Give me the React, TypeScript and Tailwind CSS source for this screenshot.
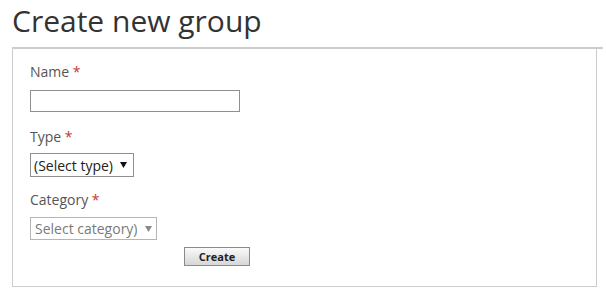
export default function App() {
  return (
    <div className="h-[294px] w-[606px] bg-white font-['Open_Sans',sans-serif]">
      <h1 className="ml-[12px] pt-[3px] text-[30px] leading-[36px] font-normal text-[#333333]">Create new group</h1>
      <div className="mt-[8px] ml-[12px] w-[591px] border-t-2 border-[#cccccc]">
        <div className="w-[585px] border-x border-b border-[#cccccc] pt-[13px] pb-[20px] pl-[17px]">
          <Label text="Name" />
          <input className="mt-[8px] block h-[22px] w-[210px] border border-[#8f8f8f] bg-white outline-none" />

          <div className="mt-[15px]">
            <Label text="Type" />
          </div>
          <div className="mt-[6px] flex h-[24px] w-[104px] items-center border border-[#8f8f8f] pl-[3px] text-[14px] text-[#222222]">
            <span>(Select type)</span>
            <Arrow color="#111111" />
          </div>

          <div className="mt-[13px]">
            <Label text="Category" />
          </div>
          <div className="mt-[7px] flex h-[23px] w-[127px] items-center border border-[#b5b5b5] pl-[4px] text-[14px] text-[#7a7a7a]">
            <span>Select category)</span>
            <Arrow color="#8a8a8a" />
          </div>

          <button className="mt-[7px] ml-[154px] block h-[19px] w-[66px] border border-[#8a8a8a] bg-gradient-to-b from-[#fafafa] to-[#d6d6d6] text-[11px] leading-[16px] font-bold text-[#222222]">
            Create
          </button>
        </div>
      </div>
    </div>
  );
}

function Label({ text }: { text: string }) {
  return (
    <div className="text-[14px] leading-[20px] text-[#555555]">
      {text} <span className="text-[#c0392b]">*</span>
    </div>
  );
}

function Arrow({ color }: { color: string }) {
  return (
    <svg width="7" height="6" viewBox="0 0 7 6" className="ml-[7px]">
      <path d="M0 0 H7 L3.5 6 Z" fill={color} />
    </svg>
  );
}
